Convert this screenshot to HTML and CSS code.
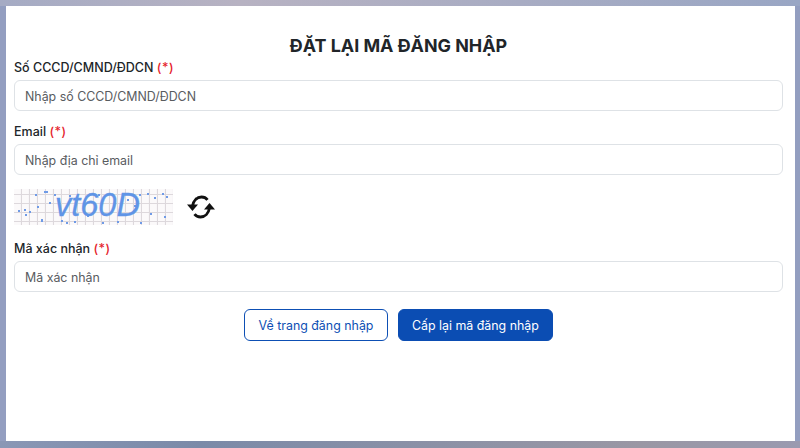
FILE: index.html
```html
<!DOCTYPE html>
<html lang="vi">
<head>
    <meta charset="UTF-8">
    <meta name="viewport" content="width=device-width, initial-scale=1.0">
    <title>Đặt lại mã đăng nhập</title>
    <link rel="stylesheet" href="styles.css">
</head>
<body>
    <div class="modal">
        <h1>ĐẶT LẠI MÃ ĐĂNG NHẬP</h1>
        <form>
            <div class="field">
                <label for="cccd">Số CCCD/CMND/ĐDCN <span class="req">(*)</span></label>
                <input type="text" id="cccd" placeholder="Nhập số CCCD/CMND/ĐDCN">
            </div>
            <div class="field">
                <label for="email">Email <span class="req">(*)</span></label>
                <input type="text" id="email" placeholder="Nhập địa chỉ email">
            </div>
            <div class="captcha-row">
                <div class="captcha">
                    <svg class="captcha-noise" width="159" height="36" viewBox="0 0 159 36">
                        <defs>
                            <pattern id="grid" width="8" height="9" patternUnits="userSpaceOnUse">
                                <path d="M7.500 0V9M0 5.500H8" stroke="#ddd8dc" stroke-width="1.200" fill="none"/>
                            </pattern>
                        </defs>
                        <rect width="159" height="36" fill="#fbf9fa"/>
                        <rect width="159" height="36" fill="url(#grid)"/>
                        <g fill="#6f9ae6">
                            <rect x="21" y="5" width="2" height="2"/>
                            <rect x="30" y="2" width="4" height="2"/>
                            <rect x="40" y="5" width="2" height="2"/>
                            <rect x="55" y="6" width="2" height="2"/>
                            <rect x="4" y="21" width="2" height="2"/>
                            <rect x="10" y="20" width="2" height="2"/>
                            <rect x="15" y="22" width="2" height="2"/>
                            <rect x="23" y="17" width="2" height="2"/>
                            <rect x="27" y="30" width="2" height="3"/>
                            <rect x="11" y="25" width="2" height="2"/>
                            <rect x="35" y="13" width="2" height="2"/>
                            <rect x="47" y="31" width="2" height="2"/>
                            <rect x="52" y="33" width="2" height="2"/>
                            <rect x="60" y="32" width="2" height="2"/>
                            <rect x="73" y="26" width="2" height="2"/>
                            <rect x="84" y="5" width="2" height="2"/>
                            <rect x="88" y="33" width="2" height="2"/>
                            <rect x="103" y="32" width="2" height="2"/>
                            <rect x="113" y="10" width="2" height="2"/>
                            <rect x="120" y="16" width="2" height="2"/>
                            <rect x="125" y="5" width="2" height="2"/>
                            <rect x="133" y="4" width="2" height="2"/>
                            <rect x="140" y="8" width="2" height="2"/>
                            <rect x="148" y="4" width="2" height="2"/>
                            <rect x="152" y="7" width="2" height="2"/>
                            <rect x="136" y="24" width="2" height="2"/>
                            <rect x="150" y="27" width="2" height="2"/>
                            <rect x="126" y="33" width="2" height="2"/>
                        </g>
                    </svg>
                    <span class="captcha-text">vt60D</span>
                </div>
                <svg class="refresh" width="30" height="26" viewBox="0 0 30 26">
                    <g fill="none" stroke="#111" stroke-width="2.800">
                        <path d="M6.500 12C7.500 6.500 11 3 15.500 3c2.500 0 4.600 1 6 2.800"/>
                        <path d="M23.500 14C22.500 19.500 19 23 14.500 23c-2.500 0-4.600-1-6-2.800"/>
                    </g>
                    <path d="M1 10.500h11l-5.500 6.500z" fill="#111"/>
                    <path d="M29 15.500H18l5.500-6.500z" fill="#111"/>
                </svg>
            </div>
            <div class="field">
                <label for="code">Mã xác nhận <span class="req">(*)</span></label>
                <input type="text" id="code" placeholder="Mã xác nhận">
            </div>
            <div class="actions">
                <button type="button" class="btn btn-outline">Về trang đăng nhập</button>
                <button type="button" class="btn btn-primary">Cấp lại mã đăng nhập</button>
            </div>
        </form>
    </div>
</body>
</html>
```

FILE: styles.css
```css
html, body {
    height: 100%;
}

body {
    margin: 0;
    padding: 6px 5px 7px 6px;
    box-sizing: border-box;
    height: 448px;
    overflow: hidden;
    background:
        linear-gradient(90deg, #a5abc4 0, #b7b2c2 30%, #99a6c4 100%) top / 100% 6px no-repeat,
        linear-gradient(90deg, #8a97b5 0, #7b8aa8 25%, #9a97a4 80%, #9a9ab0 100%) bottom / 100% 7px no-repeat,
        #939ec0;
    font-family: Inter, "Noto Sans", sans-serif;
    color: #212529;
}

.modal {
    height: 100%;
    background-color: #fff;
    padding: 29px 12px 0 8px;
    box-sizing: border-box;
}

h1 {
    margin: 0 0 3px;
    text-align: center;
    font-size: 17.900px;
    line-height: 22px;
    font-weight: 700;
}

.field {
    margin-bottom: 13px;
}

.field label {
    display: block;
    font-size: 12.500px;
    line-height: 15px;
    font-weight: 450;
    margin-bottom: 5px;
}

.req {
    color: #e5222b;
    letter-spacing: 0.5px;
}

.field input {
    display: block;
    width: 100%;
    height: 31px;
    box-sizing: border-box;
    border: 1px solid #dee2e6;
    border-radius: 6px;
    padding: 1px 10px 0;
    font-family: inherit;
    font-size: 12.400px;
    color: #212529;
    outline: none;
}

.field input::placeholder {
    color: #595c5f;
    opacity: 1;
}

.captcha-row {
    display: flex;
    align-items: center;
    gap: 13px;
    margin: 14px 0 16px;
}

.captcha {
    position: relative;
    width: 159px;
    height: 36px;
}

.captcha-noise {
    display: block;
    filter: blur(0.4px);
}

.captcha-text {
    position: absolute;
    left: 41px;
    top: 0;
    font-family: "Liberation Sans", sans-serif;
    font-style: italic;
    font-size: 32.500px;
    line-height: 32px;
    color: #5f94e6;
    -webkit-text-stroke: 0.3px #5f94e6;
}

.actions {
    display: flex;
    justify-content: center;
    gap: 10px;
    margin-top: 17px;
}

.btn {
    height: 32px;
    border-radius: 6px;
    padding: 0 13.500px;
    font-family: inherit;
    font-size: 12.400px;
    font-weight: 400;
    cursor: pointer;
}

.btn-outline {
    background-color: #fff;
    border: 1px solid #0d4fb4;
    color: #0d4fb4;
}

.btn-primary {
    padding: 0 13px;
    background-color: #0b4db3;
    border: 1px solid #0b4db3;
    color: #fff;
}
```
